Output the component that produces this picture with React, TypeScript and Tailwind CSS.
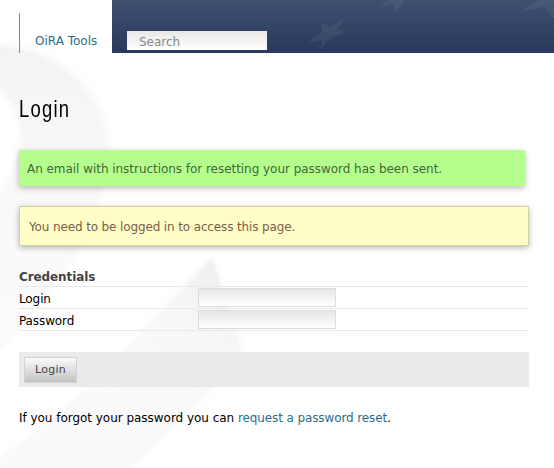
import type { ReactNode } from "react";

function Backdrop() {
  return (
    <svg className="absolute inset-0 -z-10" width="554" height="468" viewBox="0 0 554 468" fill="none" aria-hidden="true">
      <defs>
        <linearGradient id="ribbon" x1="0" y1="43" x2="0" y2="350" gradientUnits="userSpaceOnUse">
          <stop stopColor="#f3f3f3" />
          <stop offset="0.4" stopColor="#f8f8f8" />
          <stop offset="1" stopColor="#fbfbfb" />
        </linearGradient>
        <linearGradient id="tail" x1="212" y1="258" x2="80" y2="440" gradientUnits="userSpaceOnUse">
          <stop stopColor="#efefef" />
          <stop offset="0.35" stopColor="#f8f8f8" />
          <stop offset="1" stopColor="#fafafa" />
        </linearGradient>
        <filter id="halo" x="-20%" y="-20%" width="140%" height="140%">
          <feGaussianBlur stdDeviation="5" />
        </filter>
        <filter id="soft">
          <feGaussianBlur stdDeviation="1.6" />
        </filter>
      </defs>
      <g filter="url(#halo)" fill="#f8f8f8">
        <path d="M-20 43C55 39 106 88 109 145C107 220 60 290-20 370V220C15 180 22 150 21 130C20 105 0 83-20 80Z" />
        <path d="M212 258L243 350Q235 366 215 385L130 468L110 490H-30L0 460Q90 395 148 325Z" />
      </g>
      <g filter="url(#soft)">
        <path fill="url(#ribbon)" d="M-20 46C52 42 103 90 106 145C104 216 57 287-20 367V222C15 182 24 150 22 130C20 107 0 82-20 77Z" />
        <path fill="url(#tail)" d="M212 258L241 350Q233 364 212 387L127 468L110 490H-30L0 458Q90 397 150 325Z" />
      </g>
    </svg>
  );
}

function Stars() {
  return (
    <svg className="block h-[53px] w-full" viewBox="0 0 442 53" fill="#ffffff" aria-hidden="true">
      <path fillOpacity="0.06" d="M194.3 43.3L209.7 32.5V23.3L219 26.7L233.7 17.3L225.3 28.7L234.3 32.3L219 36.7L209.3 49.3V40Z" />
      <path fillOpacity="0.06" d="M265 8L281-2H294L283.3 12.7L281 3.5Z" />
      <path fillOpacity="0.06" d="M407 12.3L426-1H442V18H440L432 6.5Z" />
    </svg>
  );
}

function Header() {
  return (
    <header className="flex h-[53px]">
      <nav className="ml-[19px] mt-[13px] w-[93px] border-l border-[#4a9cb8] pl-[15px] pt-5">
        <a className="block whitespace-nowrap leading-4 tracking-[0px] text-[#2a6d8a]">OiRA Tools</a>
      </nav>
      <div className="relative flex-1 bg-linear-to-b from-[#3e4f70] to-[#283a5b]">
        <Stars />
        <input
          placeholder="Search"
          className="absolute left-[15px] top-[31px] h-[19px] w-[140px] bg-linear-to-b from-[#e8e8e8] to-white pb-0 pl-3 pt-[3px] tracking-normal placeholder:text-[#888888]"
        />
      </div>
    </header>
  );
}

function Row({ label, type }: { label: ReactNode; type: string }) {
  return (
    <label className="flex h-[22px] items-start border-b border-[#e9e9e9] pt-px">
      <span className="w-[179px] pt-[3px] leading-4 tracking-[-0.1px]">{label}</span>
      <input type={type} className="h-[19px] w-[138px] border border-[#dddddd] bg-linear-to-b from-[#e6e6e6] to-white px-1" />
    </label>
  );
}

export default function App() {
  return (
    <div className="relative isolate h-[468px] w-[554px] overflow-hidden bg-white font-['DejaVu_Sans',sans-serif] text-[12px] tracking-[-0.2px] text-black">
      <Backdrop />
      <Header />
      <main className="pl-[19px] pr-[25px]">
        <h1 className="origin-left scale-x-[0.77] pt-[41px] font-['Liberation_Sans',sans-serif] text-[24px] leading-[30px] tracking-[1.6px]">
          Login
        </h1>
        <p className="mr-1 mt-[26px] h-9 bg-[#b4ff8d] pl-2 pt-[11px] leading-4 tracking-[-0.04px] text-[#45663a] shadow-[0_2px_6px_rgba(0,0,0,0.27)]">
          An email with instructions for resetting your password has been sent.
        </p>
        <p className="mt-5 h-10 border border-[#d0d0a0] bg-[#fffdc8] pl-[9px] pt-3 leading-4 tracking-[-0.13px] text-[#7a604b] shadow-[0_2px_6px_rgba(0,0,0,0.27)]">
          You need to be logged in to access this page.
        </p>
        <form>
          <h2 className="mt-[23px] h-[18px] border-b border-[#e9e9e9] font-bold leading-4 tracking-[-0.1px] text-[#444444]">Credentials</h2>
          <Row label="Login" type="text" />
          <Row label="Password" type="password" />
          <div className="mt-[21px] h-[35px] bg-[#eaeaea] pl-[5px] pt-[5px]">
            <button
              type="button"
              className="block h-[26px] w-[53px] border border-[#d2d2d2] bg-linear-to-b from-[#fbfbfb] to-[#c3c3c3] text-[11px] leading-4 tracking-[0.3px] text-[#444444]"
            >
              Login
            </button>
          </div>
        </form>
        <p className="mt-[23px] leading-4 tracking-[-0.03px]">
          If you forgot your password you can{" "}
          <a className="tracking-[-0.11px] text-[#2a6d8a]">request a password reset</a>.
        </p>
      </main>
    </div>
  );
}
